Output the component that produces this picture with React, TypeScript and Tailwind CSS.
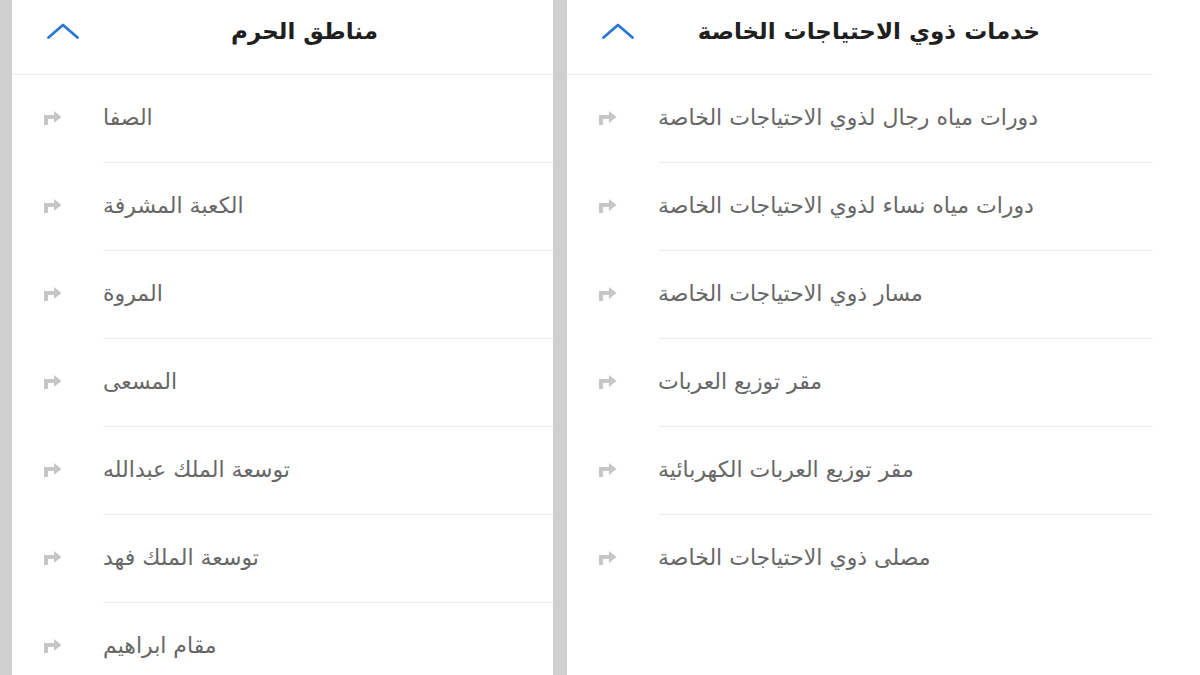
import React from "react";

const ArrowIcon = () => (
  <svg width="20" height="16" viewBox="0 0 20 16" className="shrink-0">
    <path d="M3 16 V8 H12" fill="none" stroke="#c6c6c6" strokeWidth="4" strokeLinejoin="miter" />
    <path d="M11 2 L18.5 8 L11 14 Z" fill="#c6c6c6" />
  </svg>
);

const Chevron = () => (
  <svg width="34" height="18" viewBox="0 0 34 18">
    <path d="M2.5 15.5 L17 3 L31.5 15.5" fill="none" stroke="#2a78d6" strokeWidth="2.8" strokeLinecap="round" strokeLinejoin="round" />
  </svg>
);

const Panel = ({ title, items, titleRight, lineWidth, panelWidth }: { title: string; items: string[]; titleRight: string; lineWidth: string; panelWidth: string }) => (
  <div className={`bg-white h-full shrink-0 ${panelWidth}`}>
    <div className={`${lineWidth}`}>
      <div className="h-[75px] flex items-center border-b border-[#ececec] pl-[34px] pb-[12px]">
        <Chevron />
        <div className={`flex-1 flex justify-end ${titleRight}`}>
          <span dir="rtl" className="text-[23px] font-bold text-[#1f1f1f] leading-none">{title}</span>
        </div>
      </div>
      {items.map((t, i) => (
        <div key={i} className="h-[88px] flex items-center pl-[31px]">
          <div className="-mt-[4px]">
            <ArrowIcon />
          </div>
          <div className={`ml-[40px] flex-1 h-full flex items-center ${i < items.length - 1 ? "border-b border-[#ececec]" : ""}`}>
            <span dir="rtl" className="text-[22px] text-[#676767] leading-none -mt-[2px]">{t}</span>
          </div>
        </div>
      ))}
    </div>
  </div>
);

export default function App() {
  const left = [
    "الصفا",
    "الكعبة المشرفة",
    "المروة",
    "المسعى",
    "توسعة الملك عبدالله",
    "توسعة الملك فهد",
    "مقام ابراهيم",
  ];
  const right = [
    "دورات مياه رجال لذوي الاحتياجات الخاصة",
    "دورات مياه نساء لذوي الاحتياجات الخاصة",
    "مسار ذوي الاحتياجات الخاصة",
    "مقر توزيع العربات",
    "مقر توزيع العربات الكهربائية",
    "مصلى ذوي الاحتياجات الخاصة",
  ];
  return (
    <div
      className="w-[1200px] h-[675px] overflow-hidden flex bg-[#cfcfcf]"
      style={{ fontFamily: '"DejaVu Sans", "Noto Sans", sans-serif' }}
    >
      <div className="w-[12px] shrink-0 bg-[#cfcfcf]" />
      <Panel title="مناطق الحرم" items={left} titleRight="pr-[175px]" lineWidth="w-[541px]" panelWidth="w-[541px]" />
      <div className="w-[14px] shrink-0 bg-[#cfcfcf]" />
      <Panel
        title="خدمات ذوي الاحتياجات الخاصة"
        items={right}
        titleRight="pr-[113px]"
        lineWidth="w-[586px]"
        panelWidth="flex-1"
      />
    </div>
  );
}
